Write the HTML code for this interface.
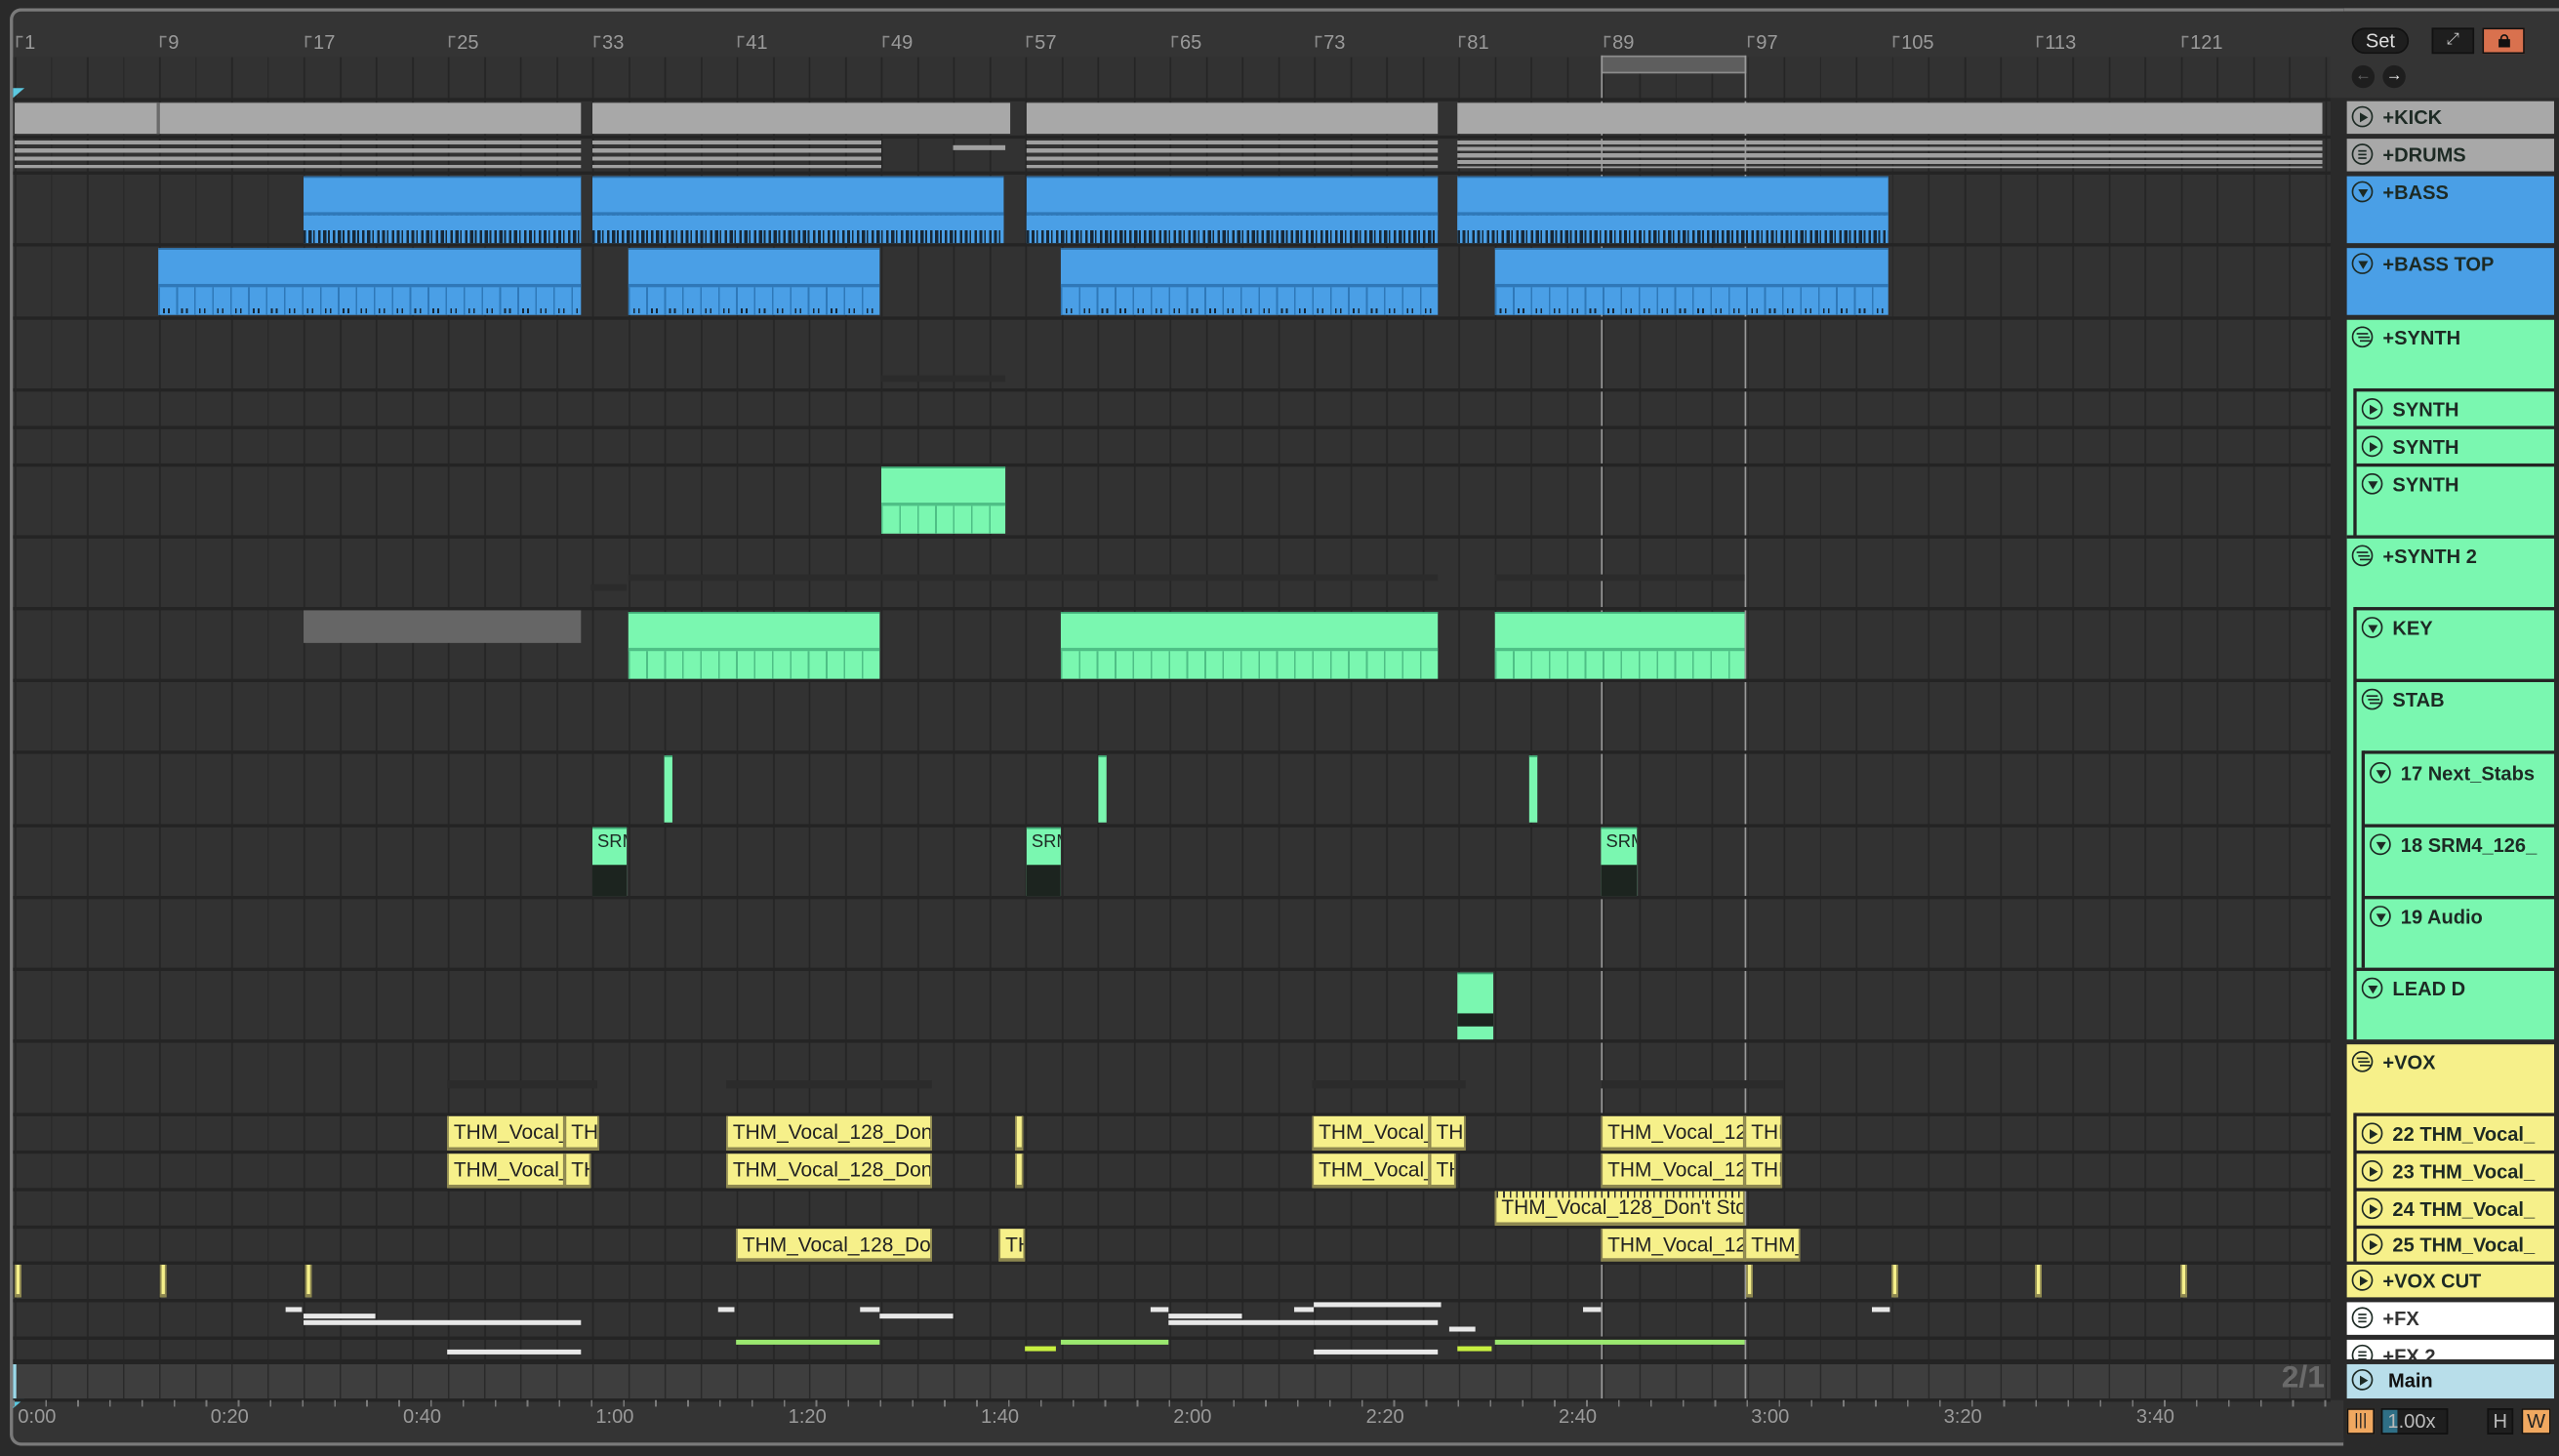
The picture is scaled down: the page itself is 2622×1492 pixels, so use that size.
<!DOCTYPE html>
<html><head><meta charset="utf-8">
<style>
*{margin:0;padding:0;box-sizing:border-box}
html,body{width:2622px;height:1492px;overflow:hidden;background:#2a2a2a}
#s{position:absolute;left:0;top:0;width:1568px;height:892px;transform:scale(1.672194);transform-origin:0 0;font-family:"Liberation Sans",sans-serif}
.a{position:absolute}
.frame{left:6px;top:5px;width:1430px;height:881px;border:2px solid #7a7a7a;border-right:none;border-radius:7px 0 0 7px;background:#343434}
.grid{left:8px;top:35px;width:1420px;height:800px;background-color:#323232;background-image:repeating-linear-gradient(90deg,#252525 0 1px,transparent 1px 22.12px);background-position:1px 0}
.sep{position:absolute;left:8px;width:1420px;height:2px;background:#242424}
.rl{position:absolute;top:19px;color:#9a9a9a;font-size:12px;font-family:"Liberation Sans Narrow","Liberation Sans",sans-serif}
.tk{position:absolute;top:22px;width:4px;height:7px;border-left:1px solid #8a8a8a;border-top:1px solid #8a8a8a}
.gr{background:#a8a8a8}
.bl{background:#4a9fe6;border-top:1px solid #2f6ea5}
.bl i{position:absolute;left:0;right:0;bottom:0;height:19px;border-top:2px solid #2f78b8;background:linear-gradient(#4a9fe6 0 9px,transparent 9px),repeating-linear-gradient(90deg,#172838 0 1.5px,transparent 1.5px 3px,#172838 3px 5px,transparent 5px 6px,#172838 6px 7px,transparent 7px 9px)}
.bl b{position:absolute;left:0;right:0;bottom:0;height:19px;border-top:2px solid #2f78b8;background:repeating-linear-gradient(90deg,#2f78b8 0 1px,transparent 1px 11px),repeating-linear-gradient(90deg,transparent 0 3px,#172838 3px 4px,transparent 4px 6px,#172838 6px 7px,transparent 7px 11px) 0 13px/100% 3px no-repeat}
.gn{background:#7af7b0;border-top:1px solid #3da874}
.gn b{position:absolute;left:0;right:0;bottom:0;height:19px;border-top:2px solid #4fbf86;background:repeating-linear-gradient(90deg,#4fbf86 0 1px,transparent 1px 11px)}
.yl{background:#f6f08a;border:1px solid #8d8750;border-top:none;border-bottom:2px solid #8d8750;color:#222;font-family:"Liberation Sans Narrow","Liberation Sans",sans-serif;font-size:12.5px;line-height:20px;padding-left:3px;overflow:hidden;white-space:nowrap}
.wl{position:absolute;height:3px;background:#e8e8e8}
.lg{position:absolute;height:3px;background:#9be870}
.hd{position:absolute;font-weight:bold;font-size:12px;color:#1d2a24;white-space:nowrap;overflow:hidden}
.ic{display:inline-block;width:13px;height:13px;border:1.3px solid #1d2a24;border-radius:50%;vertical-align:-2px;margin-right:6px;position:relative}
.ic.p::after{content:"";position:absolute;left:4px;top:2.5px;border-left:5px solid #1d2a24;border-top:3.2px solid transparent;border-bottom:3.2px solid transparent}
.ic.d::after{content:"";position:absolute;left:2.5px;top:4px;border-top:5px solid #1d2a24;border-left:3.2px solid transparent;border-right:3.2px solid transparent}
.ic.l::after{content:"";position:absolute;left:3px;top:3px;width:5px;height:1.2px;background:#1d2a24;box-shadow:0 2.2px #1d2a24,0 4.4px #1d2a24}
.ic.f::after{content:"";position:absolute;left:2px;top:3px;width:7px;height:1.2px;background:#1d2a24;box-shadow:1px 2.2px #1d2a24,2px 4.4px #1d2a24}
.vl{position:absolute;width:2px;background:#242424}
.hl{position:absolute;height:2px;background:#242424}
.tl{position:absolute;top:861px;color:#9a9a9a;font-size:12px;font-family:"Liberation Sans Narrow","Liberation Sans",sans-serif}
</style></head><body><div id="s">
<div class="a frame"></div>
<div class="a" style="left:1436px;top:5px;width:132px;height:2px;background:#7a7a7a"></div>
<div class="a grid"></div>
<div class="a" style="left:8px;top:836px;width:1420px;height:21px;background-color:#3e3e3e;background-image:repeating-linear-gradient(90deg,#2a2a2a 0 1px,transparent 1px 22.12px);background-position:1px 0"></div>
<div class="a" style="left:8px;top:836px;width:2px;height:21px;background:#9ad8e8"></div>
<div class="a" style="left:8px;top:54px;border-left:7px solid #5bc8e0;border-bottom:6px solid transparent"></div>
<div class="a" style="left:8px;top:857px;border-left:7px solid #5bc8e0;border-bottom:6px solid transparent"></div>

<!-- ruler -->
<div class="tk" style="left:10px"></div><div class="rl" style="left:15px">1</div>
<div class="tk" style="left:98px"></div><div class="rl" style="left:103px">9</div>
<div class="tk" style="left:187px"></div><div class="rl" style="left:192px">17</div>
<div class="tk" style="left:275px"></div><div class="rl" style="left:280px">25</div>
<div class="tk" style="left:364px"></div><div class="rl" style="left:369px">33</div>
<div class="tk" style="left:452px"></div><div class="rl" style="left:457px">41</div>
<div class="tk" style="left:541px"></div><div class="rl" style="left:546px">49</div>
<div class="tk" style="left:629px"></div><div class="rl" style="left:634px">57</div>
<div class="tk" style="left:718px"></div><div class="rl" style="left:723px">65</div>
<div class="tk" style="left:806px"></div><div class="rl" style="left:811px">73</div>
<div class="tk" style="left:894px"></div><div class="rl" style="left:899px">81</div>
<div class="tk" style="left:983px"></div><div class="rl" style="left:988px">89</div>
<div class="tk" style="left:1071px"></div><div class="rl" style="left:1076px">97</div>
<div class="tk" style="left:1160px"></div><div class="rl" style="left:1165px">105</div>
<div class="tk" style="left:1248px"></div><div class="rl" style="left:1253px">113</div>
<div class="tk" style="left:1337px"></div><div class="rl" style="left:1342px">121</div>
<!-- loop -->
<div class="a" style="left:981px;top:34px;width:89px;height:11px;background:#5e5e5e;border:1.5px solid #8c8c8c"></div>
<div class="a" style="left:981px;top:34px;width:1px;height:824px;background:#9a9a9a"></div>
<div class="a" style="left:1069px;top:34px;width:1px;height:824px;background:#9a9a9a"></div>

<!-- separators -->
<div class="sep" style="top:60px"></div><div class="sep" style="top:83px"></div><div class="sep" style="top:105px"></div><div class="sep" style="top:149px"></div><div class="sep" style="top:194px"></div><div class="sep" style="top:238px"></div><div class="sep" style="top:261px"></div><div class="sep" style="top:284px"></div><div class="sep" style="top:328px"></div><div class="sep" style="top:372px"></div><div class="sep" style="top:416px"></div><div class="sep" style="top:460px"></div><div class="sep" style="top:505px"></div><div class="sep" style="top:549px"></div><div class="sep" style="top:593px"></div><div class="sep" style="top:637px"></div><div class="sep" style="top:682px"></div><div class="sep" style="top:705px"></div><div class="sep" style="top:728px"></div><div class="sep" style="top:751px"></div><div class="sep" style="top:773px"></div><div class="sep" style="top:796px"></div><div class="sep" style="top:819px"></div><div class="sep" style="top:833px;height:3px"></div><div class="sep" style="top:857px"></div>

<!-- KICK -->
<div class="a gr" style="left:9px;top:63px;width:347px;height:19px"></div>
<div class="a gr" style="left:363px;top:63px;width:256px;height:19px"></div>
<div class="a gr" style="left:629px;top:63px;width:252px;height:19px"></div>
<div class="a gr" style="left:893px;top:63px;width:530px;height:19px"></div>
<div class="a" style="left:96px;top:63px;width:2px;height:19px;background:#6a6a6a"></div>
<!-- DRUMS -->
<div class="a" style="left:9px;top:86px;width:347px;height:17px;background:repeating-linear-gradient(#a0a0a0 0 2.5px,transparent 2.5px 5px)"></div>
<div class="a" style="left:363px;top:86px;width:177px;height:17px;background:repeating-linear-gradient(#a0a0a0 0 2.5px,transparent 2.5px 5px)"></div>
<div class="a" style="left:584px;top:89px;width:32px;height:3px;background:#a0a0a0"></div>
<div class="a" style="left:629px;top:86px;width:252px;height:17px;background:repeating-linear-gradient(#a0a0a0 0 2.5px,transparent 2.5px 5px)"></div>
<div class="a" style="left:893px;top:86px;width:530px;height:17px;background:repeating-linear-gradient(#a0a0a0 0 2.5px,transparent 2.5px 4px)"></div>
<!-- BASS -->
<div class="a bl" style="left:186px;top:108px;width:170px;height:41px"><i></i></div>
<div class="a bl" style="left:363px;top:108px;width:252px;height:41px"><i></i></div>
<div class="a bl" style="left:629px;top:108px;width:252px;height:41px"><i></i></div>
<div class="a bl" style="left:893px;top:108px;width:264px;height:41px"><i></i></div>
<!-- BASS TOP -->
<div class="a bl" style="left:97px;top:152px;width:259px;height:41px"><b></b></div>
<div class="a bl" style="left:385px;top:152px;width:154px;height:41px"><b></b></div>
<div class="a bl" style="left:650px;top:152px;width:231px;height:41px"><b></b></div>
<div class="a bl" style="left:916px;top:152px;width:241px;height:41px"><b></b></div>
<!-- dim -->
<div class="a" style="left:540px;top:230px;width:76px;height:4px;background:#2b2b2b"></div>
<div class="a" style="left:385px;top:352px;width:496px;height:4px;background:#2b2b2b"></div>
<div class="a" style="left:916px;top:352px;width:153px;height:4px;background:#2b2b2b"></div>
<div class="a" style="left:362px;top:358px;width:22px;height:4px;background:#2b2b2b"></div>
<!-- SYNTH 3 -->
<div class="a gn" style="left:540px;top:286px;width:76px;height:41px"><b></b></div>
<!-- KEY -->
<div class="a" style="left:186px;top:374px;width:170px;height:20px;background:#666"></div>
<div class="a gn" style="left:385px;top:375px;width:154px;height:41px"><b></b></div>
<div class="a gn" style="left:650px;top:375px;width:231px;height:41px"><b></b></div>
<div class="a gn" style="left:916px;top:375px;width:153px;height:41px"><b></b></div>
<!-- stabs -->
<div class="a gn" style="left:407px;top:463px;width:5px;height:41px"></div>
<div class="a gn" style="left:673px;top:463px;width:5px;height:41px"></div>
<div class="a gn" style="left:937px;top:463px;width:5px;height:41px"></div>
<div class="a gn" style="left:363px;top:507px;width:21px;height:42px;font-size:11px;color:#1d2a24;font-family:'Liberation Sans Narrow','Liberation Sans',sans-serif;padding:2px 0 0 3px;overflow:hidden">SRM<div class="a" style="left:0;right:0;bottom:0;height:19px;background:#1c241f"></div></div>
<div class="a gn" style="left:629px;top:507px;width:21px;height:42px;font-size:11px;color:#1d2a24;font-family:'Liberation Sans Narrow','Liberation Sans',sans-serif;padding:2px 0 0 3px;overflow:hidden">SRM<div class="a" style="left:0;right:0;bottom:0;height:19px;background:#1c241f"></div></div>
<div class="a gn" style="left:981px;top:507px;width:22px;height:42px;font-size:11px;color:#1d2a24;font-family:'Liberation Sans Narrow','Liberation Sans',sans-serif;padding:2px 0 0 3px;overflow:hidden">SRM<div class="a" style="left:0;right:0;bottom:0;height:19px;background:#1c241f"></div></div>
<!-- LEAD -->
<div class="a gn" style="left:893px;top:596px;width:22px;height:41px"><div class="a" style="left:0;right:0;top:24px;height:8px;background:#1c241f"></div></div>
<!-- VOX dim -->
<div class="a" style="left:274px;top:662px;width:92px;height:5px;background:#2b2b2b"></div>
<div class="a" style="left:445px;top:662px;width:126px;height:5px;background:#2b2b2b"></div>
<div class="a" style="left:804px;top:662px;width:94px;height:5px;background:#2b2b2b"></div>
<div class="a" style="left:981px;top:662px;width:112px;height:5px;background:#2b2b2b"></div>
<!-- 22 -->
<div class="a yl" style="left:274px;top:684px;width:72px;height:21px">THM_Vocal_128</div>
<div class="a yl" style="left:346px;top:684px;width:21px;height:21px">THM</div>
<div class="a yl" style="left:445px;top:684px;width:126px;height:21px">THM_Vocal_128_Don't</div>
<div class="a yl" style="left:622px;top:684px;width:5px;height:21px"></div>
<div class="a yl" style="left:804px;top:684px;width:72px;height:21px">THM_Vocal_128</div>
<div class="a yl" style="left:876px;top:684px;width:22px;height:21px">THM</div>
<div class="a yl" style="left:981px;top:684px;width:88px;height:21px">THM_Vocal_128</div>
<div class="a yl" style="left:1069px;top:684px;width:23px;height:21px">THM</div>
<!-- 23 -->
<div class="a yl" style="left:274px;top:707px;width:72px;height:21px">THM_Vocal_128</div>
<div class="a yl" style="left:346px;top:707px;width:16px;height:21px">THM</div>
<div class="a yl" style="left:445px;top:707px;width:126px;height:21px">THM_Vocal_128_Don't</div>
<div class="a yl" style="left:622px;top:707px;width:5px;height:21px"></div>
<div class="a yl" style="left:804px;top:707px;width:72px;height:21px">THM_Vocal_128</div>
<div class="a yl" style="left:876px;top:707px;width:16px;height:21px">THM</div>
<div class="a yl" style="left:981px;top:707px;width:88px;height:21px">THM_Vocal_128</div>
<div class="a yl" style="left:1069px;top:707px;width:23px;height:21px">THM</div>
<!-- 24 -->
<div class="a yl" style="left:916px;top:730px;width:153px;height:21px;background-image:repeating-linear-gradient(90deg,#333 0 1px,transparent 1px 4px);background-size:100% 4px;background-repeat:repeat-x">THM_Vocal_128_Don't Stop</div>
<!-- 25 -->
<div class="a yl" style="left:451px;top:753px;width:120px;height:20px">THM_Vocal_128_Don't</div>
<div class="a yl" style="left:612px;top:753px;width:16px;height:20px">THM</div>
<div class="a yl" style="left:981px;top:753px;width:88px;height:20px">THM_Vocal_128</div>
<div class="a yl" style="left:1069px;top:753px;width:34px;height:20px">THM_</div>
<!-- VOX CUT -->
<div class="a yl" style="left:9px;top:775px;width:4px;height:20px;padding:0"></div>
<div class="a yl" style="left:98px;top:775px;width:4px;height:20px;padding:0"></div>
<div class="a yl" style="left:187px;top:775px;width:4px;height:20px;padding:0"></div>
<div class="a yl" style="left:1070px;top:775px;width:4px;height:20px;padding:0"></div>
<div class="a yl" style="left:1159px;top:775px;width:4px;height:20px;padding:0"></div>
<div class="a yl" style="left:1247px;top:775px;width:4px;height:20px;padding:0"></div>
<div class="a yl" style="left:1336px;top:775px;width:4px;height:20px;padding:0"></div>
<!-- FX -->
<div class="wl" style="left:175px;top:801px;width:10px"></div>
<div class="wl" style="left:186px;top:805px;width:44px"></div>
<div class="wl" style="left:186px;top:809px;width:170px"></div>
<div class="wl" style="left:440px;top:801px;width:10px"></div>
<div class="wl" style="left:527px;top:801px;width:12px"></div>
<div class="wl" style="left:539px;top:805px;width:45px"></div>
<div class="wl" style="left:705px;top:801px;width:11px"></div>
<div class="wl" style="left:716px;top:805px;width:45px"></div>
<div class="wl" style="left:716px;top:809px;width:89px"></div>
<div class="wl" style="left:793px;top:801px;width:12px"></div>
<div class="wl" style="left:805px;top:798px;width:78px"></div>
<div class="wl" style="left:805px;top:809px;width:76px"></div>
<div class="wl" style="left:888px;top:813px;width:16px"></div>
<div class="wl" style="left:970px;top:801px;width:11px"></div>
<div class="wl" style="left:1147px;top:801px;width:11px"></div>
<!-- FX2 -->
<div class="wl" style="left:274px;top:827px;width:82px"></div>
<div class="lg" style="left:451px;top:821px;width:88px"></div>
<div class="lg" style="left:628px;top:825px;width:19px;background:#c8f040"></div>
<div class="lg" style="left:650px;top:821px;width:66px"></div>
<div class="wl" style="left:805px;top:827px;width:76px"></div>
<div class="lg" style="left:893px;top:825px;width:21px;background:#c8f040"></div>
<div class="lg" style="left:916px;top:821px;width:153px"></div>

<div class="a" style="left:1398px;top:834px;color:#6a6a6a;font-size:19px;font-weight:bold;font-family:'Liberation Sans Narrow','Liberation Sans',sans-serif">2/1</div>

<!-- time ruler -->
<div class="a" style="left:8px;top:858px;width:1420px;height:4px;background:repeating-linear-gradient(90deg,#7a7a7a 0 1px,transparent 1px 19.67px)"></div>
<div class="tl" style="left:11px">0:00</div><div class="tl" style="left:129px">0:20</div><div class="tl" style="left:247px">0:40</div><div class="tl" style="left:365px">1:00</div><div class="tl" style="left:483px">1:20</div><div class="tl" style="left:601px">1:40</div><div class="tl" style="left:719px">2:00</div><div class="tl" style="left:837px">2:20</div><div class="tl" style="left:955px">2:40</div><div class="tl" style="left:1073px">3:00</div><div class="tl" style="left:1191px">3:20</div><div class="tl" style="left:1309px">3:40</div>

<!-- header area -->
<div class="a" style="left:1428px;top:7px;width:140px;height:53px;background:#343434"></div>
<div class="a" style="left:1441px;top:17px;width:35px;height:16px;border-radius:8px;background:#1e1e1e;border:1px solid #111;color:#ddd;font-size:12px;text-align:center;line-height:14px">Set</div>
<div class="a" style="left:1490px;top:17px;width:26px;height:16px;background:#1e1e1e;border:1px solid #111;color:#ccc;font-size:10px;text-align:center;line-height:14px">⤢</div>
<div class="a" style="left:1521px;top:17px;width:26px;height:16px;background:#d9714e;border:1px solid #111"><div class="a" style="left:9px;top:6px;width:7px;height:5px;background:#111"></div><div class="a" style="left:10px;top:3px;width:5px;height:5px;border:1.3px solid #111;border-radius:3px 3px 0 0"></div></div>
<div class="a" style="left:1441px;top:40px;width:14px;height:14px;border-radius:50%;background:#1e1e1e;color:#666;font-size:10px;text-align:center;line-height:14px">←</div>
<div class="a" style="left:1460px;top:40px;width:14px;height:14px;border-radius:50%;background:#1e1e1e;color:#eee;font-size:10px;text-align:center;line-height:14px">→</div>
<div class="a" style="left:1428px;top:60px;width:140px;height:798px;background:#2a2a2a"></div>

<div class="hd" style="left:1438px;top:62px;width:127px;height:20px;background:#a8a8a8;padding:3px 0 0 3px"><span class="ic p"></span>+KICK</div>
<div class="hd" style="left:1438px;top:85px;width:127px;height:20px;background:#a8a8a8;padding:3px 0 0 3px"><span class="ic l"></span>+DRUMS</div>
<div class="hd" style="left:1438px;top:108px;width:127px;height:41px;background:#4a9fe6;padding:3px 0 0 3px"><span class="ic d"></span>+BASS</div>
<div class="hd" style="left:1438px;top:152px;width:127px;height:41px;background:#4a9fe6;padding:3px 0 0 3px"><span class="ic d"></span>+BASS TOP</div>
<div class="a" style="left:1438px;top:196px;width:127px;height:441px;background:#7af7b0"></div>
<div class="hl" style="left:1443px;top:238px;width:122px"></div>
<div class="hl" style="left:1443px;top:261px;width:122px"></div>
<div class="hl" style="left:1443px;top:284px;width:122px"></div>
<div class="hl" style="left:1438px;top:328px;width:127px"></div>
<div class="hl" style="left:1443px;top:372px;width:122px"></div>
<div class="hl" style="left:1443px;top:416px;width:122px"></div>
<div class="hl" style="left:1448px;top:460px;width:117px"></div>
<div class="hl" style="left:1448px;top:505px;width:117px"></div>
<div class="hl" style="left:1448px;top:549px;width:117px"></div>
<div class="hl" style="left:1443px;top:593px;width:122px"></div>
<div class="vl" style="left:1442px;top:238px;height:90px"></div>
<div class="vl" style="left:1442px;top:372px;height:265px"></div>
<div class="vl" style="left:1447px;top:460px;height:133px"></div>
<div class="hd" style="left:1441px;top:200px"><span class="ic f"></span>+SYNTH</div>
<div class="hd" style="left:1447px;top:244px"><span class="ic p"></span>SYNTH</div>
<div class="hd" style="left:1447px;top:267px"><span class="ic p"></span>SYNTH</div>
<div class="hd" style="left:1447px;top:290px"><span class="ic d"></span>SYNTH</div>
<div class="hd" style="left:1441px;top:334px"><span class="ic f"></span>+SYNTH 2</div>
<div class="hd" style="left:1447px;top:378px"><span class="ic d"></span>KEY</div>
<div class="hd" style="left:1447px;top:422px"><span class="ic f"></span>STAB</div>
<div class="hd" style="left:1452px;top:467px;width:112px"><span class="ic d"></span>17 Next_Stabs</div>
<div class="hd" style="left:1452px;top:511px;width:106px"><span class="ic d"></span>18 SRM4_126_</div>
<div class="hd" style="left:1452px;top:555px"><span class="ic d"></span>19 Audio</div>
<div class="hd" style="left:1447px;top:599px"><span class="ic d"></span>LEAD D</div>
<div class="a" style="left:1438px;top:640px;width:127px;height:133px;background:#f6f08a"></div>
<div class="vl" style="left:1442px;top:682px;height:91px"></div>
<div class="hl" style="left:1443px;top:682px;width:122px"></div>
<div class="hl" style="left:1443px;top:705px;width:122px"></div>
<div class="hl" style="left:1443px;top:728px;width:122px"></div>
<div class="hl" style="left:1443px;top:751px;width:122px"></div>
<div class="hd" style="left:1441px;top:644px"><span class="ic f"></span>+VOX</div>
<div class="hd" style="left:1447px;top:688px;width:110px"><span class="ic p"></span>22 THM_Vocal_</div>
<div class="hd" style="left:1447px;top:711px;width:110px"><span class="ic p"></span>23 THM_Vocal_</div>
<div class="hd" style="left:1447px;top:734px;width:110px"><span class="ic p"></span>24 THM_Vocal_</div>
<div class="hd" style="left:1447px;top:756px;width:110px"><span class="ic p"></span>25 THM_Vocal_</div>
<div class="hd" style="left:1438px;top:775px;width:127px;height:20px;background:#f6f08a;padding:3px 0 0 3px"><span class="ic p"></span>+VOX CUT</div>
<div class="hd" style="left:1438px;top:798px;width:127px;height:20px;background:#fff;padding:3px 0 0 3px;color:#333"><span class="ic l"></span>+FX</div>
<div class="hd" style="left:1438px;top:821px;width:127px;height:12px;background:#fff;padding:3px 0 0 3px;color:#333"><span class="ic l"></span>+FX 2</div>
<div class="hd" style="left:1438px;top:836px;width:127px;height:21px;background:#b8deea;padding:3px 0 0 3px;color:#111"><span class="ic p"></span> Main</div>

<!-- bottom right -->
<div class="a" style="left:1438px;top:863px;width:17px;height:16px;background:#f0a860;border:1px solid #111;color:#222;font-size:10px;text-align:center;line-height:14px">|||</div>
<div class="a" style="left:1459px;top:863px;width:41px;height:16px;background:#1e1e1e;border:1px solid #111;color:#bbb;font-size:12px;line-height:14px;padding-left:3px"><div class="a" style="left:0;top:0;width:9px;height:14px;background:#2f6f86"></div><span style="position:relative">1.00x</span></div>
<div class="a" style="left:1524px;top:863px;width:16px;height:16px;background:#1e1e1e;border:1px solid #111;color:#bbb;font-size:12px;text-align:center;line-height:14px">H</div>
<div class="a" style="left:1545px;top:863px;width:18px;height:16px;background:#f0a860;border:1px solid #111;color:#222;font-size:12px;text-align:center;line-height:14px">W</div>
</div></body></html>
